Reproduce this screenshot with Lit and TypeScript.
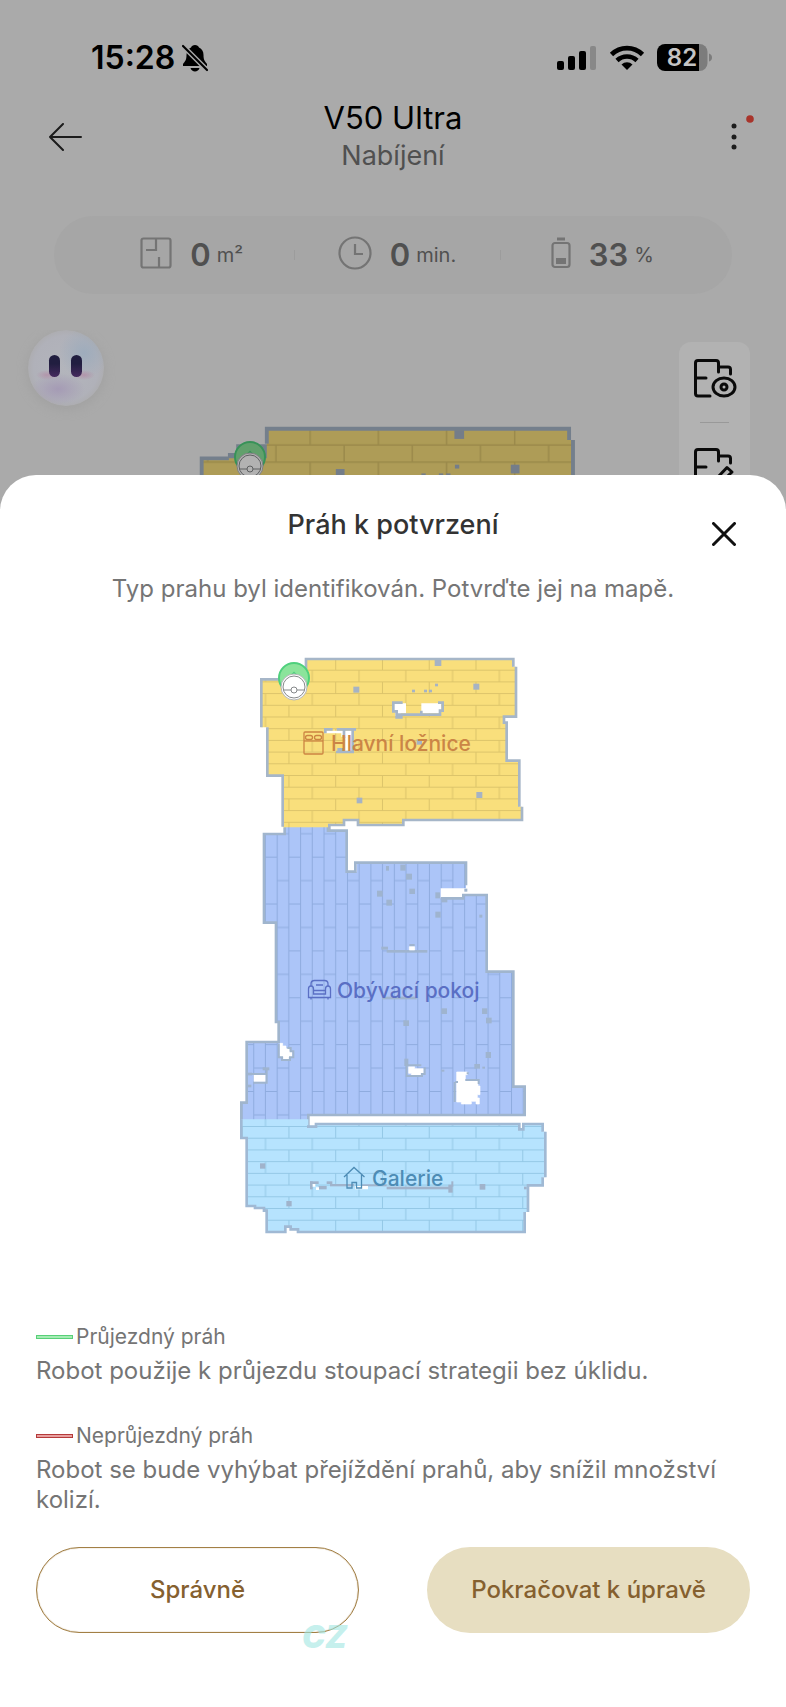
import { LitElement, html, svg, css } from "lit";
import { customElement } from "lit/decorators.js";

type Box = [number, number, number, number];

// Map geometry is kept on a grid of three units per pixel.
const BEDROOM =
  "M228 57H850V80H858V230H822V248H830V362H868V500H876V540H520V555H384V540H342V555H300V562H158V407H112V262H94V118H228Z";
const BEDROOM_WALL =
  "M158 560V407H112V262M94 262V118H150M228 88V57H850V80M858 80V230H822V248H830V362H868V500M876 500V540H520V555H384V540H342V555H298V574";
const LIVING =
  "M162 560H295V572H350V695H380V668H708V745H632V775H700V765H770V995H850V1340H884V1425H235V1440H34V1388H50V1206H146V1146H138V848H102V582H162Z";
const LIVING_WALL =
  "M164 562V582H102V848H138V1146H146V1206H50V1388H34V1440M294 560V572H350V695H376V668H708V736M632 775H700V765H770V995H850V1340H884V1425H235V1460";
const GALLERY =
  "M34 1438H235V1460H260V1452H868V1468H880V1452H938V1475H946V1612H938V1636H894V1716H884V1776H205V1768H182V1760H166V1776H110V1712H102V1704H75V1698H50V1494H34Z";
const GALLERY_WALL =
  "M34 1438V1494H50V1698H75V1704H102V1712H110V1776H166V1760H182V1768H204V1776H884V1716M894 1716V1636H938V1612M946 1612V1475M938 1475V1452H880V1468H868V1452H258V1460H231";

const BEDROOM_MARKS: Box[] = [
  [614, 60, 20, 18], [370, 140, 18, 18], [730, 131, 18, 18], [546, 149, 9, 8], [582, 149, 9, 8],
  [597, 149, 9, 8], [615, 131, 9, 8], [380, 473, 17, 17], [739, 456, 18, 18], [560, 298, 16, 16],
];
const LIVING_MARKS: Box[] = [
  [468, 678, 9, 14], [511, 674, 16, 18], [528, 701, 18, 18], [538, 746, 17, 16], [441, 752, 17, 18],
  [469, 779, 17, 18], [616, 757, 14, 18], [616, 815, 16, 18], [634, 775, 18, 12], [748, 824, 9, 9],
  [454, 920, 20, 9], [470, 930, 122, 8], [538, 912, 16, 8], [456, 1070, 104, 8], [634, 1105, 17, 17], [756, 1105, 16, 17],
  [768, 1133, 17, 17], [520, 1141, 17, 17], [767, 1236, 16, 18], [733, 1272, 17, 14], [523, 1256, 12, 22],
  [634, 1289, 9, 6], [98, 1282, 20, 9], [50, 1298, 16, 8], [757, 1280, 8, 6], [50, 1334, 14, 8],
];
const GALLERY_MARKS: Box[] = [
  [90, 1570, 16, 16], [169, 1683, 16, 16], [749, 1632, 17, 17], [240, 1624, 26, 8], [240, 1624, 8, 24],
  [266, 1638, 24, 10], [290, 1624, 17, 8], [300, 1632, 72, 7], [395, 1633, 75, 6], [470, 1640, 196, 8],
  [655, 1634, 13, 24], [664, 1624, 6, 16], [882, 1640, 8, 8],
];

const marks = (boxes: Box[], fill: string) =>
  boxes.map(([x, y, w, h]) => svg`<rect x=${x} y=${y} width=${w} height=${h} fill=${fill} />`);

const bedroom = () => svg`
  <defs>
    <pattern id="planks-warm" width="140.300" height="70.200" x="35" y="54" patternUnits="userSpaceOnUse">
      <rect width="141" height="71" fill="#f9df7c" />
      <path d="M0 1.500H141M0 36.500H141M1.500 0V36M71.500 36V71" stroke="#dcc46a" stroke-width="3" fill="none" />
    </pattern>
  </defs>
  <path d=${BEDROOM} fill="url(#planks-warm)" />
  <path d=${BEDROOM_WALL} fill="none" stroke="#a6b6c8" stroke-width="8" />
  ${marks(BEDROOM_MARKS, "#a6b3c4")}
  <path d="M490 190H528V220H512V228H496V212H490ZM574 190H634V212H628V220H574ZM284 272H366V332H346V290H334V280H284Z" fill="#fff" />
  <path d="M518 188H490V214H500V232H518M500 224H630V212H638V188H624M574 222V212" fill="none" stroke="#a6b6c8" stroke-width="8" />
  <path d="M286 280V268H308M320 268H378M342 268V294M368 268V336M318 336H372M322 328H342" fill="none" stroke="#a6b6c8" stroke-width="8" />`;

const dock = (x: number, y: number, id: string) => svg`
  <g transform="translate(${x} ${y})" id=${id}>
    <circle r="15" fill="#8be49b" stroke="#4fd07d" stroke-width="2" />
    <path d="M-6 1L0 -5L6 1M0 -5V3" fill="none" stroke="#4fd07d" stroke-width="2" />
    <circle cy="9" r="13" fill="#fff" stroke="#b4b6b8" stroke-width="1" />
    <circle cy="9" r="11" fill="#fff" stroke="#85888a" stroke-width="1" />
    <path d="M-10 12H-3M3 12H10" stroke="#85888a" stroke-width="1" />
    <circle cy="12" r="3" fill="#fff" stroke="#85888a" stroke-width="1" />
  </g>`;

@customElement("app-root")
export class AppRoot extends LitElement {
  static styles = css`
    :host {
      display: flex;
      flex-direction: column;
      min-height: 100vh;
      background: #aaa;
      color: #000;
      font-family: Inter, "Noto Sans", sans-serif;
    }
    * { box-sizing: border-box; }
    svg { display: block; flex: none; }
    h1, h2, p, dl, dt, dd { margin: 0; }
    button {
      display: block;
      padding: 0;
      border: 0;
      background: none;
      font: inherit;
      color: inherit;
      cursor: pointer;
    }
    .status {
      display: flex;
      align-items: center;
      gap: 12px;
      padding: 38px 73px 0 91px;
      height: 78px;
    }
    .time { font-size: 32px; line-height: 40px; font-weight: 600; }
    .time-group { display: flex; align-items: center; gap: 7px; margin-right: auto; }
    .header {
      display: grid;
      grid-template-columns: 1fr auto 1fr;
      align-items: center;
      padding: 0 30px 0 48px;
      margin-top: 21px;
    }
    .heading { text-align: center; padding-right: 18px; }
    .device { font-size: 31px; line-height: 38px; font-weight: 400; }
    .state { font-size: 27px; line-height: 38px; color: #505050; }
    .more { justify-self: end; }
    .stats {
      display: grid;
      grid-template-columns: repeat(3, 1fr);
      align-items: center;
      height: 78px;
      margin: 41px 54px 0;
      padding: 0 27px 0 35px;
      border-radius: 39px;
      background: #a6a6a6;
      color: #505050;
    }
    .stat { display: flex; align-items: center; justify-content: center; position: relative; }
    .stat + .stat::before {
      content: "";
      position: absolute;
      left: 0;
      width: 1px;
      height: 10px;
      background: #9c9c9c;
    }
    .value { font-size: 31px; line-height: 38px; font-weight: 600; margin: 0 6px 0 18px; }
    .unit { font-size: 20px; line-height: 38px; }
    .stage {
      display: grid;
      grid-template-columns: 76px 1fr 71px;
      align-items: start;
      height: 185px;
      margin-top: 36px;
      padding: 0 36px 0 28px;
      overflow: hidden;
    }
    .mascot { border-radius: 50%; box-shadow: 0 3px 12px #a0a0a0; }
    .floor { justify-self: center; margin-top: 70px; filter: brightness(0.7); }
    .tools {
      display: flex;
      flex-direction: column;
      align-items: center;
      gap: 24px;
      margin-top: 12px;
      padding: 16px 0;
      border-radius: 12px;
      background: #b2b2b2;
    }
    .rule { width: 29px; height: 1px; background: #999; }
    .sheet {
      flex: 1;
      position: relative;
      margin-top: -40px;
      padding: 30px 36px 75px;
      border-radius: 36px 36px 0 0;
      background: #fff;
      color: #757575;
      font-size: 24px;
      line-height: 30px;
    }
    .sheet-head { display: grid; grid-template-columns: 1fr auto 1fr; min-height: 41px; }
    .sheet-title { grid-column: 2; font-size: 27px; line-height: 40px; font-weight: 500; color: #333; }
    .close { justify-self: end; align-self: end; margin-right: 14px; }
    .lead { margin-top: 28px; text-align: center; }
    .map { margin: 36px auto 0; max-width: 100%; }
    .label { font-family: Inter, "Noto Sans", sans-serif; font-size: 21px; font-weight: 500; }
    .legend { margin-top: 72px; }
    .legend-name { display: flex; align-items: center; gap: 3px; font-size: 21px; line-height: 30px; }
    .legend-text { margin-top: 4px; }
    .legend-text + .legend-name { margin-top: 35px; }
    .swatch { width: 37px; height: 4px; border: 1px solid; }
    .pass { border-color: #58d078; background: #a5ecb4; }
    .block { border-color: #b53a3a; background: #e8a0a0; }
    .actions {
      position: relative;
      display: grid;
      grid-template-columns: 1fr 1fr;
      gap: 68px;
      margin-top: 32px;
    }
    .action { height: 86px; border-radius: 43px; font-size: 24px; font-weight: 500; color: #85602f; }
    .outline { border: 1px solid #a27f45; box-shadow: inset 0 0 1px #a27f45; }
    .solid { background: #e7dec1; }
    .mark {
      position: absolute;
      left: 266px;
      bottom: -19px;
      font-size: 31px;
      line-height: 30px;
      font-weight: 900;
      font-style: italic;
      color: rgba(160, 230, 226, 0.6);
    }
  `;

  private statusBar() {
    return html`<div class="status">
      <div class="time-group">
        <span class="time">15:28</span>
        <svg width="26" height="28" viewBox="0 0 26 28" aria-hidden="true">
          <path d="M13 1C15 1 16.500 2 17 3.500C20 5 21.500 7.500 21.500 11C21.500 16 23 17.500 25 20V22H1V20C3 17.500 4.500 16 4.500 11C4.500 7.500 6 5 9 3.500C9.500 2 11 1 13 1ZM8.500 24H17.500C17 26 15 27.500 13 27.500S9 26 8.500 24Z" />
          <path d="M0 1L27 28" stroke="#aaa" stroke-width="5" />
          <path d="M1 2L25 26" stroke="#000" stroke-width="2.200" stroke-linecap="round" />
        </svg>
      </div>
      <svg width="40" height="26" viewBox="0 0 40 26" aria-hidden="true">
        <rect x="0" y="16" width="7" height="9" rx="2" /><rect x="11" y="11" width="7" height="14" rx="2" />
        <rect x="22" y="6" width="7" height="19" rx="2" /><rect x="33" y="1" width="6" height="24" rx="2" fill="#888" />
      </svg>
      <svg width="36" height="26" viewBox="0 0 36 26" aria-hidden="true">
        <path d="M2.500 9.500A22 22 0 0 1 33.500 9.500M8 15.500A14.500 14.500 0 0 1 28 15.500" fill="none" stroke="#000" stroke-width="4.600" />
        <path d="M18 25L12.500 19.500A8 8 0 0 1 23.500 19.500Z" />
      </svg>
      <svg width="56" height="28" viewBox="0 0 56 28" role="img" aria-label="82 %">
        <path d="M42 0H42.500A8 8 0 0 1 50.500 8V19A8 8 0 0 1 42.500 27H42Z" fill="#7c7c7c" />
        <path d="M8 0H42V27H8A8 8 0 0 1 0 19V8A8 8 0 0 1 8 0Z" />
        <path d="M52 9.500Q55 10.500 55 13.500T52 17.500Z" fill="#7c7c7c" />
        <text x="25" y="22" text-anchor="middle" font-size="24" font-weight="600" fill="#c4c4c4">82</text>
      </svg>
    </div>`;
  }

  private backdrop() {
    return html`
      <header class="header">
        <button aria-label="Zpět">
          <svg width="34" height="28" viewBox="0 0 34 28">
            <path d="M15 1L2 14L15 27M2 14H33" fill="none" stroke="#1c1c1c" stroke-width="2" stroke-linecap="round" stroke-linejoin="round" />
          </svg>
        </button>
        <div class="heading">
          <h1 class="device">V50 Ultra</h1>
          <p class="state">Nabíjení</p>
        </div>
        <button class="more" aria-label="Další">
          <svg width="30" height="48" viewBox="0 0 30 48">
            <circle cx="8" cy="13" r="2.500" fill="#1c1c1c" /><circle cx="8" cy="24" r="2.500" fill="#1c1c1c" />
            <circle cx="8" cy="34" r="2.500" fill="#1c1c1c" /><circle cx="24" cy="6" r="3.800" fill="#a8342b" />
          </svg>
        </button>
      </header>
      <div class="stats">
        <div class="stat">
          <svg width="32" height="36" viewBox="0 0 32 36" fill="none" stroke="#747474" stroke-width="2.200">
            <rect x="1.500" y="1.500" width="29" height="29" rx="2" /><path d="M16 2V13H6M19 30V20" />
          </svg>
          <span class="value">0</span><span class="unit">m²</span>
        </div>
        <div class="stat">
          <svg width="34" height="38" viewBox="0 0 34 38" fill="none" stroke="#747474" stroke-width="2.200">
            <circle cx="17" cy="17" r="15.500" /><path d="M17 8V18H25" />
          </svg>
          <span class="value">0</span><span class="unit">min.</span>
        </div>
        <div class="stat">
          <svg width="20" height="36" viewBox="0 0 20 36" fill="none" stroke="#747474" stroke-width="2.200">
            <path d="M6 2H14" stroke-width="3" /><rect x="1.500" y="6" width="17" height="24" rx="2.500" />
            <rect x="5" y="21" width="10" height="6" fill="#747474" stroke="none" />
          </svg>
          <span class="value">33</span><span class="unit">%</span>
        </div>
      </div>
      <div class="stage">
        <svg class="mascot" width="76" height="76" viewBox="0 0 76 76" aria-hidden="true">
          <defs>
            <radialGradient id="ball"><stop offset="0" stop-color="#b3b5bc" /><stop offset="0.850" stop-color="#b0b1b9" /><stop offset="1" stop-color="#adadb1" /></radialGradient>
            <radialGradient id="sky"><stop offset="0" stop-color="#9eacbc" /><stop offset="1" stop-color="#9eacbc" stop-opacity="0" /></radialGradient>
            <radialGradient id="lilac"><stop offset="0" stop-color="#a59bb5" /><stop offset="1" stop-color="#a59bb5" stop-opacity="0" /></radialGradient>
            <radialGradient id="blush"><stop offset="0" stop-color="#b295ab" /><stop offset="1" stop-color="#b295ab" stop-opacity="0" /></radialGradient>
            <linearGradient id="eye" x2="0" y2="1"><stop offset="0.400" stop-color="#211e40" /><stop offset="1" stop-color="#462a5e" /></linearGradient>
          </defs>
          <circle cx="38" cy="38" r="38" fill="url(#ball)" />
          <ellipse cx="56" cy="23" rx="25" ry="25" fill="url(#sky)" />
          <ellipse cx="30" cy="59" rx="27" ry="16" fill="url(#lilac)" />
          <ellipse cx="19" cy="45" rx="11" ry="5" fill="url(#blush)" />
          <ellipse cx="56" cy="45" rx="11" ry="5" fill="url(#blush)" />
          <rect x="21" y="25" width="11" height="22" rx="5.500" fill="url(#eye)" />
          <rect x="43" y="25" width="11" height="22" rx="5.500" fill="url(#eye)" />
        </svg>
        <svg class="floor" width="473" height="120" viewBox="-1 -1 473 120" aria-hidden="true">
          <g transform="scale(0.486)">
            <path d="M148 122V107H165V89H230V122Z" fill="#a6b6c8" />
            ${bedroom()}
          </g>
          ${dock(94, 56, "dock-back")}
        </svg>
        <div class="tools">
          <button aria-label="Zobrazení mapy">
            <svg width="44" height="40" viewBox="0 0 44 40" fill="none" stroke="#0a0a0a" stroke-width="3" stroke-linecap="round" stroke-linejoin="round">
              <path d="M17 38H5Q2.500 38 2.500 35.500V5Q2.500 2.500 5 2.500H23Q25.500 2.500 25.500 5V14M25.500 9H35Q37.500 9 37.500 11.500V16M3 20H13" />
              <ellipse cx="31" cy="29" rx="11" ry="9" /><circle cx="31" cy="29" r="3" />
            </svg>
          </button>
          <div class="rule"></div>
          <button aria-label="Úprava mapy">
            <svg width="44" height="40" viewBox="0 0 44 40" fill="none" stroke="#0a0a0a" stroke-width="3" stroke-linecap="round" stroke-linejoin="round">
              <path d="M17 38H5Q2.500 38 2.500 35.500V5Q2.500 2.500 5 2.500H23Q25.500 2.500 25.500 5V14M25.500 9H35Q37.500 9 37.500 11.500V16M3 20H13" />
              <path d="M22 37L24 31L34 20.500L39 25L28 35.500Z" />
            </svg>
          </button>
        </div>
      </div>`;
  }

  private map() {
    return html`<svg class="map" width="326" height="610" viewBox="0 0 326 610" role="group" aria-label="Mapa">
      <defs>
        <pattern id="planks-blue" width="70.300" height="140.600" x="140" y="650" patternUnits="userSpaceOnUse">
          <rect width="71" height="141" fill="#acc5f8" />
          <path d="M1.500 0V141M36.500 0V141M36 1.500H71M0 71.500H36" stroke="#8facdf" stroke-width="3" fill="none" />
        </pattern>
        <pattern id="planks-cyan" width="140.300" height="70.300" x="35" y="1458" patternUnits="userSpaceOnUse">
          <rect width="141" height="71" fill="#b6e3fe" />
          <path d="M0 1.500H141M0 36.500H141M1.500 0V36M71.500 36V71" stroke="#94c8e6" stroke-width="3" fill="none" />
        </pattern>
      </defs>
      <g transform="scale(0.33333)">
        <path d=${LIVING} fill="url(#planks-blue)" />
        <path d=${LIVING_WALL} fill="none" stroke="#a0b5cd" stroke-width="8" />
        ${marks(LIVING_MARKS, "#9fb4cf")}
        <rect x="703" y="746" width="9" height="9" fill="#a0b5cd" />
        <path d="M150 1210H158V1218H168V1226H178V1234H186V1252H176V1258H160V1250H150ZM72 1305H106V1325H72ZM536 1280H554V1286H580V1300H572V1307H544V1300H536ZM680 1296H712V1304H706V1322H744V1338H750V1364H742V1374H748V1392H738V1384H724V1392H694V1386H680ZM538 920H554V930H538Z"
          fill="#fff" stroke="#fff" stroke-width="2" />
        <path d="M146 1212V1252H156V1260H180V1252H190V1234H182V1224H172M66 1302H110V1328H70M584 1282V1302H576V1308H530V1276H574M674 1326V1386M676 1326H684M706 1320H746V1332M110 1290V1328M716 1300H710" fill="none" stroke="#a0b5cd" stroke-width="6" />
        <path d=${GALLERY} fill="url(#planks-cyan)" />
        <path d=${GALLERY_WALL} fill="none" stroke="#a0b9d4" stroke-width="8" />
        ${marks(GALLERY_MARKS, "#a0b3cb")}
        <path d="M248 1632H256V1640H248ZM258 1642H267V1650H258ZM375 1638H414V1648H375Z" fill="#fff" />
        ${bedroom()}
      </g>
      ${dock(64, 38, "dock-front")}
      <g fill="none" stroke="#cc8442" stroke-width="1.300">
        <rect x="74" y="92" width="19" height="22" rx="1" /><path d="M74 101H93" />
        <rect x="75.500" y="95.500" width="7" height="4" rx="2" /><rect x="84.500" y="95.500" width="7" height="4" rx="2" />
      </g>
      <text class="label" x="101" y="111" fill="#cb8546">Hlavní ložnice</text>
      <g fill="none" stroke="#5a6fc4" stroke-width="1.300">
        <path d="M81 346V344Q81 340.500 84.500 340.500H94.500Q98 340.500 98 344V346M86 345H93" />
        <path d="M81 346Q78.500 346 78.500 349V357.500H100.500V349Q100.500 346 98 346Q95.500 346 95.500 349V350.500H83.500V349Q83.500 346 81 346M83.500 350V354H95.500V350M81 357.500V359.500M98 357.500V359.500" />
      </g>
      <text class="label" x="107" y="358" fill="#5a6fc4">Obývací pokoj</text>
      <g fill="none" stroke="#4d8cb5" stroke-width="1.300">
        <path d="M114 537L124 527.500L134.500 537M117 535V548H122V542.500H126.500V548H131.500V535" />
      </g>
      <text class="label" x="142" y="546" fill="#4d8cb5">Galerie</text>
    </svg>`;
  }

  render() {
    return html`
      ${this.statusBar()}
      ${this.backdrop()}
      <section class="sheet" role="dialog" aria-labelledby="sheet-title">
        <div class="sheet-head">
          <h2 class="sheet-title" id="sheet-title">Práh k potvrzení</h2>
          <button class="close" aria-label="Zavřít">
            <svg width="24" height="24" viewBox="0 0 24 24">
              <path d="M1.500 1.500L22.500 22.500M22.500 1.500L1.500 22.500" stroke="#111" stroke-width="3" stroke-linecap="round" />
            </svg>
          </button>
        </div>
        <p class="lead">Typ prahu byl identifikován. Potvrďte jej na mapě.</p>
        ${this.map()}
        <dl class="legend">
          <dt class="legend-name"><span class="swatch pass"></span>Průjezdný práh</dt>
          <dd class="legend-text">Robot použije k průjezdu stoupací strategii bez úklidu.</dd>
          <dt class="legend-name"><span class="swatch block"></span>Neprůjezdný práh</dt>
          <dd class="legend-text">Robot se bude vyhýbat přejíždění prahů, aby snížil množství kolizí.</dd>
        </dl>
        <div class="actions">
          <button class="action outline">Správně</button>
          <button class="action solid">Pokračovat k úpravě</button>
          <span class="mark">CZ</span>
        </div>
      </section>`;
  }
}
